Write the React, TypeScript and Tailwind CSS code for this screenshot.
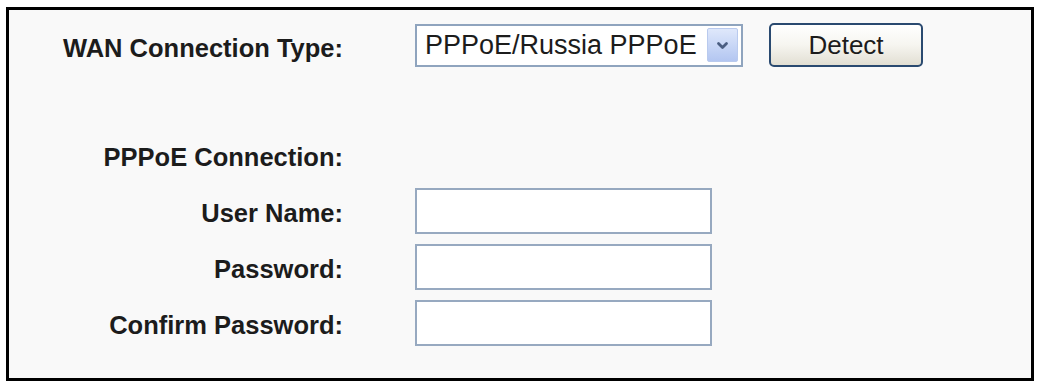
import React from 'react';

const font = { fontFamily: '"Liberation Sans", Arial, sans-serif' };

const Chevron = () => (
  <svg width="13" height="9" viewBox="0 0 13 9" fill="none">
    <path d="M2.5 2.5 L6.5 6.5 L10.5 2.5" stroke="#4b5e82" strokeWidth={2.8} strokeLinecap="round" strokeLinejoin="round" />
  </svg>
);

const FieldRow: React.FC<{ label: string; type?: string }> = ({ label, type = 'text' }) => (
  <div className="flex items-center h-[46px]">
    <div className="w-[334px] text-right pt-[3px] text-[25.5px] font-bold text-[#1c1c1c] leading-[30px] whitespace-nowrap">{label}</div>
    <input
      type={type}
      className="ml-[72px] w-[297px] h-[46px] bg-white border-2 border-[#97a9c0] outline-none px-2 text-[24px]"
      style={font}
    />
  </div>
);

export default function App() {
  return (
    <div className="w-[1037px] h-[385px] bg-white pt-[7px] pl-[6px]" style={font}>
      <div className="w-[1028px] h-[374px] border-[3px] border-black bg-[#f9f9f9] pt-[13px]">
        {/* WAN type */}
        <div className="flex items-center h-[44px]">
          <div className="w-[334px] text-right pt-[5px] text-[25.5px] font-bold text-[#1c1c1c] leading-[30px] whitespace-nowrap">
            WAN Connection Type:
          </div>
          <div className="ml-[72px] w-[328px] h-[43px] bg-white border-2 border-[#8fa4be] flex items-center">
            <span className="flex-1 pl-[8px] text-[27px] text-[#1c1c1c] leading-[30px] whitespace-nowrap">
              PPPoE/Russia PPPoE
            </span>
            <div className="w-[31px] h-[34px] mr-[3px] rounded-[2px] border border-[#b9caee] bg-linear-to-b from-[#dfe8fb] to-[#b3c6f1] flex items-center justify-center">
              <Chevron />
            </div>
          </div>
          <button
            className="ml-[26px] w-[154px] h-[44px] rounded-[5px] border-2 border-[#2a4a70] bg-linear-to-b from-white via-[#f6f5f0] to-[#e2dfd3] text-[26px] text-[#1c1c1c] leading-[30px]"
            style={font}
          >
            Detect
          </button>
        </div>

        {/* PPPoE section */}
        <div className="flex items-center h-[46px] mt-[67px]">
          <div className="w-[334px] text-right text-[25.5px] font-bold text-[#1c1c1c] leading-[30px] whitespace-nowrap">PPPoE Connection:</div>
        </div>

        <div className="mt-[8px] flex flex-col gap-[10px]">
          <FieldRow label="User Name:" />
          <FieldRow label="Password:" type="password" />
          <FieldRow label="Confirm Password:" type="password" />
        </div>
      </div>
    </div>
  );
}
